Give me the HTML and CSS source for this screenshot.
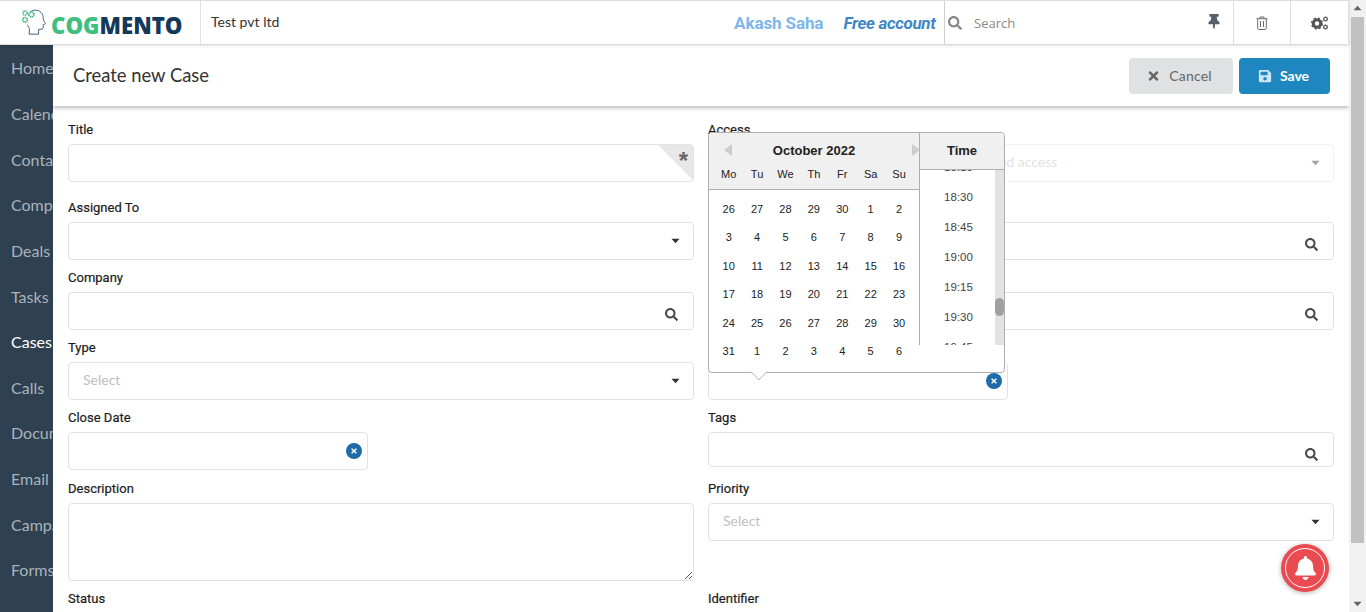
FILE: index.html
```html
<!DOCTYPE html>
<html lang="en">
<head>
<meta charset="utf-8">
<title>Create new Case</title>
<link rel="stylesheet" href="styles.css">
</head>
<body>
<svg class="defs" width="0" height="0" aria-hidden="true">
  <symbol id="i-search" viewBox="0 0 512 512"><path d="M505 442.7L405.3 343c-4.5-4.5-10.6-7-17-7H372c27.6-35.3 44-79.7 44-128C416 93.1 322.9 0 208 0S0 93.1 0 208s93.1 208 208 208c48.3 0 92.7-16.4 128-44v16.3c0 6.4 2.5 12.5 7 17l99.7 99.7c9.4 9.4 24.6 9.4 33.9 0l28.3-28.3c9.4-9.4 9.4-24.6.1-34zM208 336c-70.7 0-128-57.2-128-128 0-70.7 57.2-128 128-128 70.7 0 128 57.2 128 128 0 70.7-57.2 128-128 128z"/></symbol>
  <symbol id="i-times" viewBox="0 0 352 512"><path d="M242.72 256l100.07-100.07c12.28-12.28 12.28-32.19 0-44.48l-22.24-22.24c-12.28-12.28-32.19-12.28-44.48 0L176 189.28 75.93 89.21c-12.28-12.28-32.19-12.28-44.48 0L9.21 111.45c-12.28 12.28-12.28 32.19 0 44.48L109.28 256 9.21 356.07c-12.28 12.28-12.28 32.19 0 44.48l22.24 22.24c12.28 12.28 32.2 12.28 44.48 0L176 322.72l100.07 100.07c12.28 12.28 32.2 12.28 44.48 0l22.24-22.24c12.28-12.28 12.28-32.19 0-44.48L242.72 256z"/></symbol>
  <symbol id="i-caret" viewBox="0 0 10 6"><path d="M0.5 0.5h9L5 5.5z"/></symbol>
</svg>

<header class="topbar">
  <div class="brand">
    <svg class="brand-icon" viewBox="0 0 30 30" aria-hidden="true">
      <path d="M10 3.500c2-2 6-3 9.500-1.500 4 1.700 5.500 5.500 5.200 9-.1 1.300 2 4.200 2.300 5 .3.900-1.500 1.200-2.300 1.500 0 1.500.3 3.300-.5 4.300-1 1-3 .6-4.500.7l-.2 5.500H9l.5-5c.1-2-1.700-3.500-2.500-5.500" fill="none" stroke="#1f3f5f" stroke-width=".9"/>
      <circle cx="11.500" cy="6" r="2.800" fill="none" stroke="#2fb673" stroke-width="1.700" stroke-dasharray="1.600 .6"/>
      <circle cx="4.500" cy="4.500" r="2.300" fill="none" stroke="#2fb673" stroke-width="1.600" stroke-dasharray="1.400 .6"/>
      <circle cx="4.500" cy="12" r="2.600" fill="none" stroke="#2fb673" stroke-width="1.700" stroke-dasharray="1.500 .6"/>
    </svg>
    <span class="brand-name"><span class="brand-green">COG</span><span class="brand-navy">MENTO</span></span>
  </div>
  <div class="company">Test pvt ltd</div>
  <div class="user">
    <span class="user-name">Akash Saha</span>
    <span class="user-plan">Free account</span>
  </div>
  <div class="search">
    <svg class="search-icon"><use href="#i-search"/></svg>
    <span class="search-text">Search</span>
    <svg class="pin" viewBox="0 0 384 512" aria-hidden="true"><path d="M298.028 214.267L285.793 96H328c13.255 0 24-10.745 24-24V24c0-13.255-10.745-24-24-24H56C42.745 0 32 10.745 32 24v48c0 13.255 10.745 24 24 24h42.207L85.972 214.267C37.465 236.82 0 277.261 0 328c0 13.255 10.745 24 24 24h136v104.007c0 1.242.289 2.467.845 3.578l24 48c2.941 5.882 11.364 5.893 14.311 0l24-48a8.008 8.008 0 0 0 .845-3.578V352h136c13.255 0 24-10.745 24-24-.001-51.183-37.983-91.42-85.973-113.733z"/></svg>
  </div>
  <div class="tool">
    <svg class="trash" viewBox="0 0 12 14" aria-hidden="true"><path d="M.5 2.700h11M4 2.500V1h4v1.500M1.700 2.700v9.600c0 .7.400 1.200 1 1.200h6.600c.6 0 1-.5 1-1.200V2.700M4.500 5v6M7.500 5v6" fill="none" stroke="#6b6b6b" stroke-width="1"/></svg>
  </div>
  <div class="tool tool-last">
    <svg class="cogs" viewBox="0 0 18 14" aria-hidden="true">
      <circle cx="6" cy="7.500" r="3.700" fill="none" stroke="#555" stroke-width="3"/>
      <circle cx="6" cy="7.500" r="5.300" fill="none" stroke="#555" stroke-width="1.600" stroke-dasharray="2 2.200"/>
      <circle cx="14.500" cy="3" r="1.800" fill="none" stroke="#666" stroke-width="1.400"/>
      <circle cx="14.500" cy="11" r="1.800" fill="none" stroke="#666" stroke-width="1.400"/>
    </svg>
  </div>
</header>

<div class="shell">
  <nav class="sidebar">
    <a class="nav-item">Home</a>
    <a class="nav-item">Calendar</a>
    <a class="nav-item">Contacts</a>
    <a class="nav-item">Companies</a>
    <a class="nav-item">Deals</a>
    <a class="nav-item">Tasks</a>
    <a class="nav-item nav-active">Cases</a>
    <a class="nav-item">Calls</a>
    <a class="nav-item">Documents</a>
    <a class="nav-item">Email</a>
    <a class="nav-item">Campaigns</a>
    <a class="nav-item">Forms</a>
  </nav>

  <main class="main">
    <div class="page-head">
      <h1 class="page-title">Create new Case</h1>
      <div class="actions">
        <button class="btn btn-cancel"><svg class="btn-icon"><use href="#i-times"/></svg>Cancel</button>
        <button class="btn btn-save"><svg class="btn-icon" viewBox="0 0 448 512" aria-hidden="true"><path d="M433.941 129.941l-83.882-83.882A48 48 0 0 0 316.118 32H48C21.49 32 0 53.49 0 80v352c0 26.51 21.49 48 48 48h352c26.51 0 48-21.49 48-48V163.882a48 48 0 0 0-14.059-33.941zM224 416c-35.346 0-64-28.654-64-64 0-35.346 28.654-64 64-64s64 28.654 64 64c0 35.346-28.654 64-64 64zm96-304.52V212c0 6.627-5.373 12-12 12H76c-6.627 0-12-5.373-12-12V108c0-6.627 5.373-12 12-12h228.520c3.183 0 6.235 1.264 8.485 3.515l3.480 3.480A11.996 11.996 0 0 1 320 111.480z"/></svg>Save</button>
      </div>
    </div>

    <form class="form">
      <div class="field field-first">
        <label class="label">Title</label>
        <div class="input required"><span class="corner"></span><span class="star">*</span></div>
      </div>
      <div class="field field-first">
        <label class="label">Access</label>
        <div class="input select disabled"><span class="ph ph-access">Restricted access</span><svg class="caret"><use href="#i-caret"/></svg></div>
      </div>

      <div class="field">
        <label class="label">Assigned To</label>
        <div class="input select"><svg class="caret"><use href="#i-caret"/></svg></div>
      </div>
      <div class="field">
        <label class="label">Contact</label>
        <div class="input"><svg class="mag"><use href="#i-search"/></svg></div>
      </div>

      <div class="field">
        <label class="label">Company</label>
        <div class="input"><svg class="mag"><use href="#i-search"/></svg></div>
      </div>
      <div class="field">
        <label class="label">Deal</label>
        <div class="input"><svg class="mag"><use href="#i-search"/></svg></div>
      </div>

      <div class="field">
        <label class="label">Type</label>
        <div class="input select"><span class="ph">Select</span><svg class="caret"><use href="#i-caret"/></svg></div>
      </div>
      <div class="field">
        <label class="label">Deadline</label>
        <div class="input date"><span class="clear"><svg class="clear-x"><use href="#i-times"/></svg></span></div>
      </div>

      <div class="field field-gap">
        <label class="label">Close Date</label>
        <div class="input date"><span class="clear"><svg class="clear-x"><use href="#i-times"/></svg></span></div>
      </div>
      <div class="field field-gap">
        <label class="label">Tags</label>
        <div class="input input-short"><svg class="mag"><use href="#i-search"/></svg></div>
      </div>

      <div class="field field-text">
        <label class="label">Description</label>
        <div class="input textarea"><svg class="grip" viewBox="0 0 8 8" aria-hidden="true"><path d="M1 8l7-7M5 8l3-3" stroke="#555" fill="none"/></svg></div>
      </div>
      <div class="field field-text">
        <label class="label">Priority</label>
        <div class="input select"><span class="ph">Select</span><svg class="caret"><use href="#i-caret"/></svg></div>
      </div>

      <div class="field">
        <label class="label">Status</label>
      </div>
      <div class="field">
        <label class="label">Identifier</label>
      </div>
    </form>

    <div class="picker">
      <div class="picker-cols">
        <div class="month">
          <div class="month-head">
            <span class="arrow arrow-left"></span>
            <span class="arrow arrow-right"></span>
            <div class="month-title">October 2022</div>
            <div class="week week-names"><span>Mo</span><span>Tu</span><span>We</span><span>Th</span><span>Fr</span><span>Sa</span><span>Su</span></div>
          </div>
          <div class="days">
            <div class="week"><span>26</span><span>27</span><span>28</span><span>29</span><span>30</span><span>1</span><span>2</span></div>
            <div class="week"><span>3</span><span>4</span><span>5</span><span>6</span><span>7</span><span>8</span><span>9</span></div>
            <div class="week"><span>10</span><span>11</span><span>12</span><span>13</span><span>14</span><span>15</span><span>16</span></div>
            <div class="week"><span>17</span><span>18</span><span>19</span><span>20</span><span>21</span><span>22</span><span>23</span></div>
            <div class="week"><span>24</span><span>25</span><span>26</span><span>27</span><span>28</span><span>29</span><span>30</span></div>
            <div class="week"><span>31</span><span>1</span><span>2</span><span>3</span><span>4</span><span>5</span><span>6</span></div>
          </div>
        </div>
        <div class="time">
          <div class="time-head">Time</div>
          <div class="time-body">
            <div class="time-list">
              <div class="time-item">18:15</div>
              <div class="time-item">18:30</div>
              <div class="time-item">18:45</div>
              <div class="time-item">19:00</div>
              <div class="time-item">19:15</div>
              <div class="time-item">19:30</div>
              <div class="time-item">19:45</div>
            </div>
            <div class="time-bar"><span class="time-thumb"></span></div>
          </div>
        </div>
      </div>
      <span class="picker-tip"></span>
    </div>

    <button class="bell" aria-label="Notifications">
      <span class="bell-ring">
        <svg class="bell-icon" viewBox="0 0 448 512" aria-hidden="true"><path d="M224 512c35.320 0 63.970-28.650 63.970-64H160.030c0 35.350 28.650 64 63.970 64zm215.390-149.710c-19.320-20.760-55.470-51.990-55.470-154.290 0-77.700-54.480-139.900-127.940-155.160V32c0-17.670-14.320-32-31.980-32s-31.980 14.330-31.980 32v20.840C118.560 68.100 64.080 130.300 64.080 208c0 102.300-36.150 133.530-55.470 154.290-6 6.450-8.660 14.160-8.610 21.710.11 16.400 12.980 32 32.100 32h383.800c19.120 0 32-15.600 32.100-32 .05-7.550-2.610-15.270-8.610-21.710z"/></svg>
      </span>
    </button>
  </main>

  <div class="scrollbar">
    <svg class="sb-arrow" viewBox="0 0 10 6" aria-hidden="true"><path d="M5 .5l4.500 5H.5z"/></svg>
    <div class="sb-track"><span class="sb-thumb"></span></div>
    <svg class="sb-arrow" viewBox="0 0 10 6" aria-hidden="true"><path d="M.5 .5h9L5 5.500z"/></svg>
  </div>
</div>
</body>
</html>
```

FILE: styles.css
```css
* { box-sizing: border-box; }
html, body { margin: 0; height: 612px; overflow: hidden; }
body { font-family: "Lato", sans-serif; background: #fff; color: #333; position: relative; }
.defs { position: absolute; }

.topbar {
  height: 45px;
  width: 1349px;
  display: flex;
  align-items: stretch;
  border-top: 1px solid #dedede;
  border-bottom: 1px solid #dcdcdc;
  border-right: 1px solid #dedede;
  background: #fff;
  position: relative;
  z-index: 3;
  box-shadow: 0 1px 3px rgba(0,0,0,.12);
}
.brand { width: 201px; flex: none; display: flex; align-items: center; padding: 0 0 0 21px; border-right: 1px solid #e2e2e2; }
.brand-icon { width: 27px; height: 27px; margin: -1px 3px 0 0; flex: none; }
.brand-name { font-family: "Open Sans", sans-serif; font-weight: 800; font-size: 22.2px; letter-spacing: 0; margin: 6px 0 0 0; line-height: 26px; white-space: nowrap; }
.brand-green { color: #3fbf7f; }
.brand-navy { color: #12385a; }
.company { width: 200px; flex: none; padding-left: 10px; font-size: 14px; line-height: 42px; color: #333; white-space: nowrap; }
.user { flex: 1; display: flex; justify-content: flex-end; align-items: center; gap: 20px; padding-right: 8.500px; font-family: "Roboto", sans-serif; white-space: nowrap; }
.user-name { font-size: 17px; font-weight: 700; color: #7db6ec; letter-spacing: -.1px; }
.user-plan { font-size: 17px; font-weight: 700; font-style: italic; color: #3f87c7; letter-spacing: -.33px; }
.search { width: 290px; flex: none; display: flex; align-items: center; border-left: 1px solid #cfcfcf; border-right: 1px solid #dedede; padding-left: 3px; }
.search-icon { width: 14px; height: 14px; fill: #888; flex: none; }
.search-text { font-family: "Open Sans", sans-serif; font-size: 13px; color: #8a8a8a; margin-left: 12px; flex: 1; }
.pin { width: 12px; height: 15px; fill: #56606a; margin-right: 13px; margin-top: -3px; }
.tool { width: 57px; flex: none; display: flex; align-items: center; justify-content: center; border-right: 1px solid #dedede; }
.tool-last { border-right: 0; }
.trash { width: 12px; height: 14px; margin-top: 1px; }
.cogs { width: 18px; height: 14px; }

.shell { display: flex; height: 567px; }
.sidebar { width: 53px; flex: none; background: #2f4050; padding-top: .3px; overflow: hidden; }
.nav-item { display: block; height: 45.65px; line-height: 45px; padding-left: 11px; font-size: 16px; color: #a9b3bd; white-space: nowrap; overflow: hidden; }
.nav-active { color: #fff; }

.main { width: 1296px; flex: none; position: relative; overflow: hidden; }
.page-head { height: 61px; display: flex; align-items: center; justify-content: space-between; padding: 0 19px 0 20px; box-shadow: 0 2px 4px rgba(0,0,0,.28); position: relative; z-index: 2; background: #fff; }
.page-title { margin: -2px 0 0; font-size: 18.4px; font-weight: 400; color: #333; }
.actions { display: flex; gap: 6px; margin-top: 0; }
.btn { height: 36px; border: 0; border-radius: 4px; font-family: "Lato", sans-serif; font-size: 14px; display: flex; align-items: center; justify-content: center; padding: 0 2px 0 0; }
.btn-cancel { width: 104px; background: #e0e1e2; color: #666; font-weight: 400; letter-spacing: .2px; }
.btn-save { width: 91px; background: #1f87c0; color: #fff; font-weight: 700; }
.btn-icon { width: 14px; height: 14px; margin-right: 7px; fill: #666; }
.btn-cancel .btn-icon { width: 11px; margin-right: 10px; }
.btn-save .btn-icon { fill: #cfe7f5; margin-right: 8px; }

.form { display: grid; grid-template-columns: 626px 626px; column-gap: 14px; padding: 16px 0 0 15px; align-items: start; }
.field { height: 60px; margin-bottom: 10px; }
.field-first { margin-bottom: 18px; }
.field-gap { margin-bottom: 11px; height: 60px; }
.field-text { height: 100px; margin-bottom: 10px; }
.label { display: block; height: 22px; line-height: 15px; font-family: "Roboto", sans-serif; font-weight: 400; font-size: 13px; color: #1c1c1c; -webkit-text-stroke: .2px #1c1c1c; }
.input { height: 38px; border: 1px solid #e1e2e3; border-radius: 4px; background: #fff; position: relative; display: flex; align-items: center; }
.input-short { height: 35px; }
.textarea { height: 78px; }
.date { width: 300px; }
.required { overflow: hidden; }
.corner { position: absolute; top: -1px; right: -1px; width: 0; height: 0; border-style: solid; border-width: 0 37px 37px 0; border-color: transparent #e7e7e7 transparent transparent; }
.star { position: absolute; top: 4px; right: 5px; font-family: "Liberation Sans", sans-serif; font-size: 24px; line-height: 24px; color: #666; font-weight: 700; }
.ph { font-size: 14px; line-height: 16px; color: #c0c0c0; padding-left: 14px; margin-top: -2px; }
.ph-access { padding-left: 243px; }
.disabled { opacity: .45; }
.caret { position: absolute; right: 13px; top: 15px; width: 9px; height: 6px; fill: #333; }
.mag { position: absolute; right: 15px; top: 15px; width: 13px; height: 13px; fill: #4a4a4a; }
.clear { position: absolute; right: 5px; top: 10px; width: 16px; height: 16px; border-radius: 50%; background: #1f6ba8; display: flex; align-items: center; justify-content: center; }
.clear-x { width: 6px; height: 8px; fill: #fff; }
.grip { position: absolute; right: 1px; bottom: 1px; width: 8px; height: 8px; }

.picker { position: absolute; left: 655px; top: 87px; width: 297px; height: 241px; background: #fff; border: 1px solid #aeaeae; border-radius: 4px; z-index: 1; font-family: "Liberation Sans", sans-serif; color: #222; }
.picker-cols { display: flex; height: 213px; }
.month { width: 210px; flex: none; }
.month-head { height: 57px; background: #f0f0f0; border-bottom: 1px solid #aeaeae; border-radius: 4px 0 0 0; position: relative; }
.month-title { text-align: center; font-weight: 700; font-size: 13px; line-height: 16px; padding-top: 10px; color: #222; }
.arrow { position: absolute; top: 11px; width: 0; height: 0; border-style: solid; border-color: transparent; }
.arrow-left { left: 15px; border-width: 6px 8px 6px 0; border-right-color: #ccc; }
.arrow-right { right: -1px; border-width: 6px 0 6px 8px; border-left-color: #ccc; }
.week { display: grid; grid-template-columns: repeat(7, 28.4px); padding-left: 5.500px; font-size: 11px; text-align: center; line-height: 16px; }
.week-names { position: absolute; left: 0; top: 33px; }
.days { padding-top: 11px; height: 200px; }
.days .week { height: 28.4px; line-height: 16px; }
.time { flex: 1; border-left: 1px solid #aeaeae; position: relative; height: 212px; }
.time-head { height: 37px; background: #f0f0f0; border-bottom: 1px solid #aeaeae; border-radius: 0 4px 0 0; font-weight: 700; font-size: 13px; line-height: 35px; text-align: center; }
.time-body { display: flex; height: 175px; overflow: hidden; }
.time-list { width: 75px; flex: none; margin-top: -18px; padding-left: 2px; font-size: 11.5px; text-align: center; color: #444; }
.time-item { height: 30px; line-height: 30px; }
.time-bar { flex: 1; background: #e3e3e3; position: relative; }
.time-thumb { position: absolute; left: 0; right: 0; top: 128px; height: 18px; border-radius: 5px; background: #a0a0a0; }
.picker-tip { position: absolute; left: 42px; bottom: -8px; width: 16px; height: 16px; background: #fff; border: 1px solid #aeaeae; border-top: 0; border-left: 0; transform: rotate(45deg) scale(.72); }

.bell { position: absolute; left: 1228px; top: 499px; width: 48px; height: 48px; border-radius: 50%; border: 0; background: #e94b50; padding: 4px; box-shadow: 0 1px 5px rgba(0,0,0,.3); z-index: 4; }
.bell-ring { width: 40px; height: 40px; border: 1.5px solid #fff; border-radius: 50%; display: flex; align-items: center; justify-content: center; }
.bell-icon { width: 21px; height: 24px; fill: #fff; }

.scrollbar { width: 17px; flex: none; margin-top: -45px; height: 612px; background: #f1f1f1; display: flex; flex-direction: column; align-items: center; padding: 5px 0; }
.sb-arrow { width: 9px; height: 6px; fill: #666; flex: none; }
.sb-track { flex: 1; width: 100%; padding: 6px 2px 0; }
.sb-thumb { display: block; height: 526px; background: #c1c1c1; }
```
